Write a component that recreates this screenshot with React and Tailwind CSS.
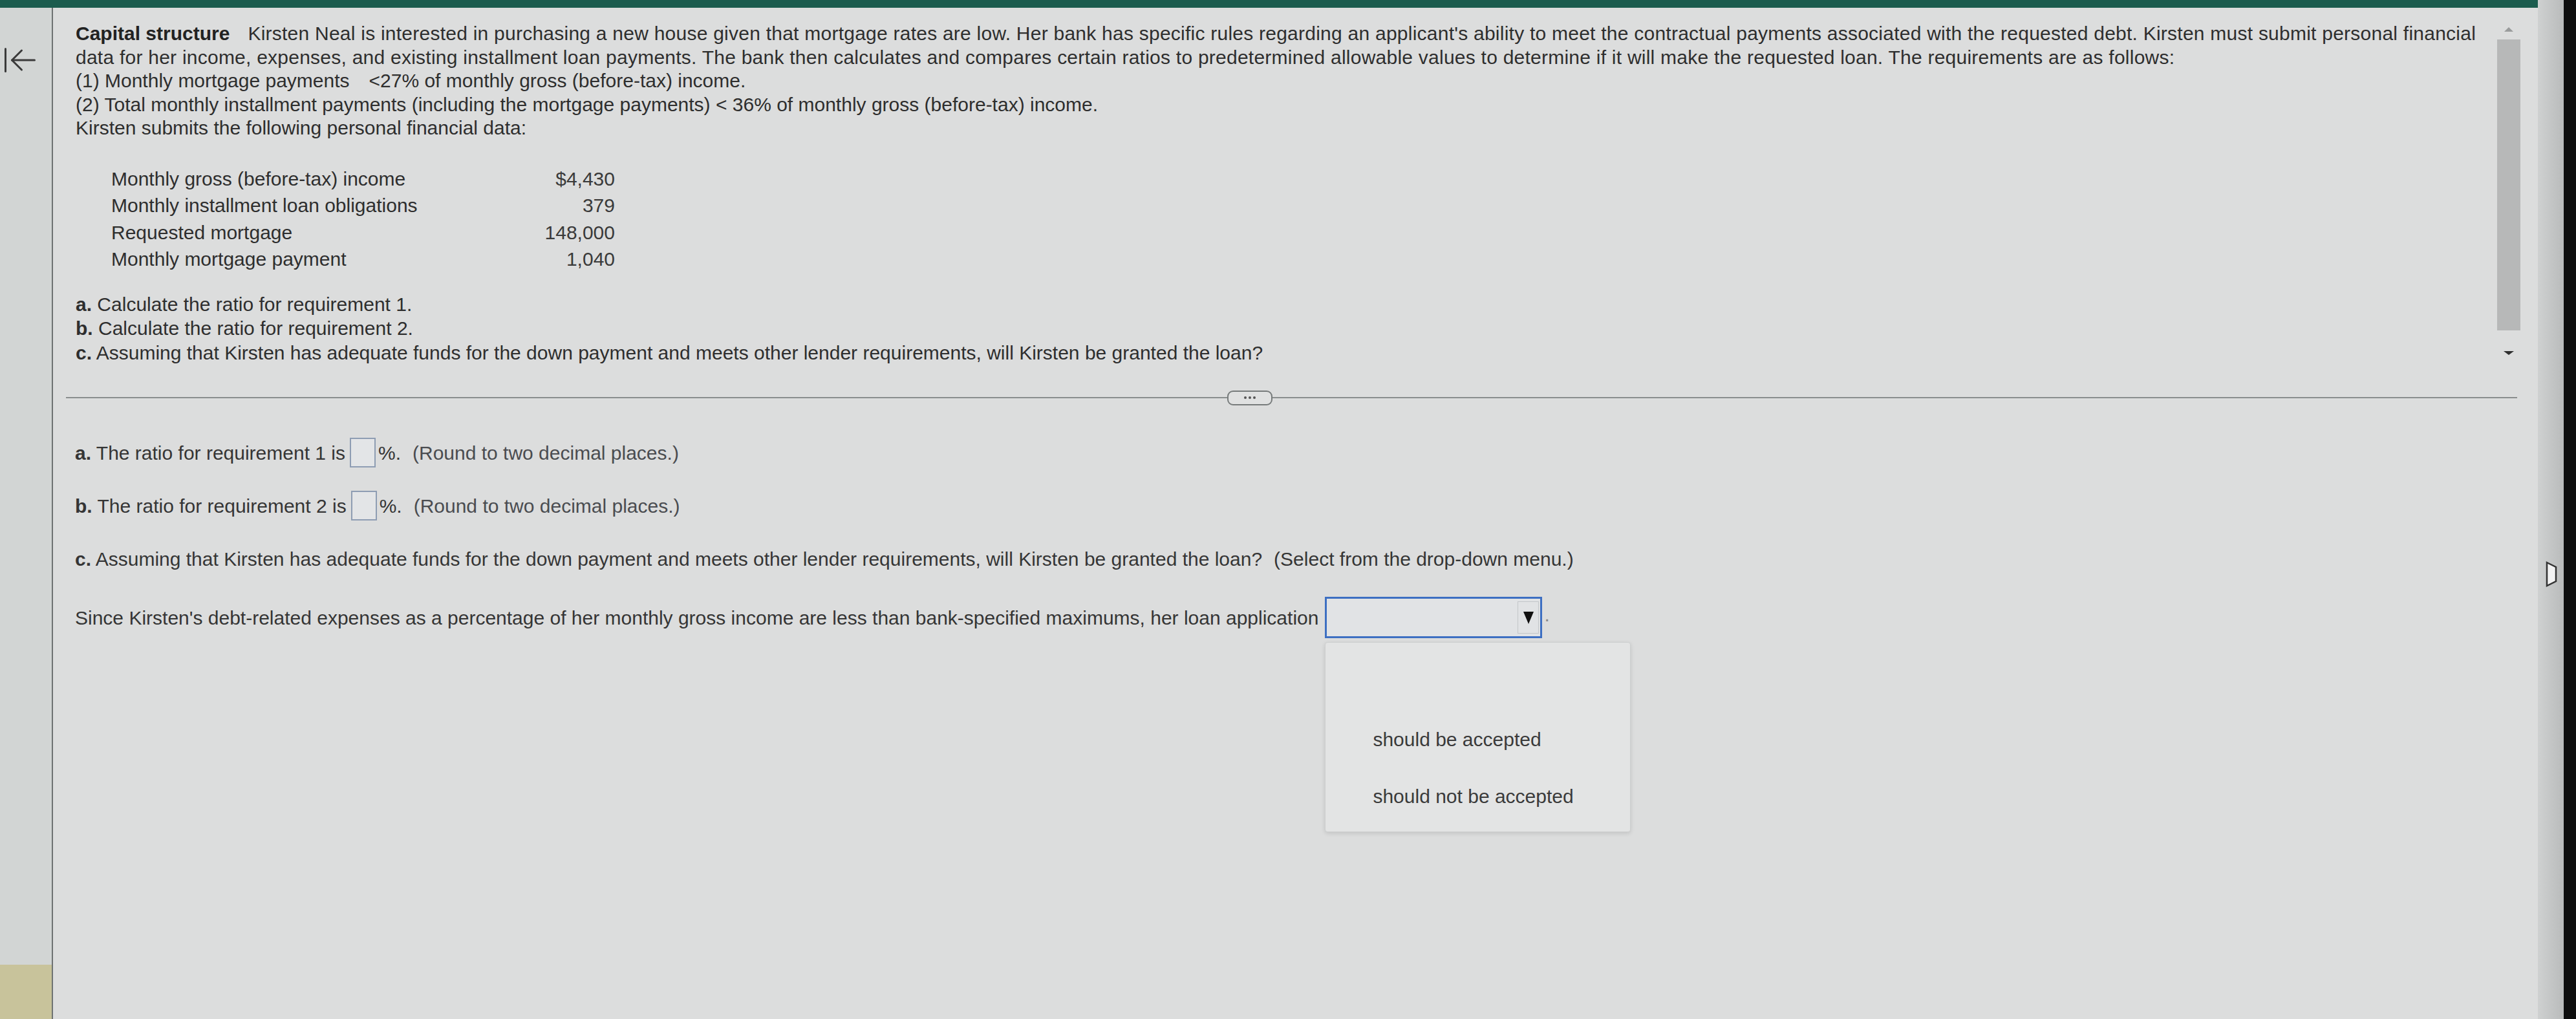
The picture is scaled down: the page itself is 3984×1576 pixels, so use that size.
import React from "react";
import { ArrowLeftToLine } from "lucide-react";

function Triangle({ dir = "down", w = 14, h = 8, color = "#333" }) {
  const pts = dir === "down" ? `0,0 ${w},0 ${w / 2},${h}` : `0,${h} ${w},${h} ${w / 2},0`;
  return (
    <svg width={w} height={h} viewBox={`0 0 ${w} ${h}`}>
      <polygon points={pts} fill={color} />
    </svg>
  );
}

function AnswerBox() {
  return <span className="inline-block w-[40px] h-[46px] border-2 border-[#8e9db3] bg-[#e3e5e7] ml-[7px] mr-[9px]" />;
}

export default function App() {
  const rows = [
    ["Monthly gross (before-tax) income", "$4,430"],
    ["Monthly installment loan obligations", "379"],
    ["Requested mortgage", "148,000"],
    ["Monthly mortgage payment", "1,040"],
  ];
  return (
    <div className="w-[3984px] h-[1576px] flex bg-[#0e0e0e] overflow-hidden font-['Liberation_Sans',Arial,sans-serif] text-[30px] text-[#2e2e2e]">
      <div className="w-[3925px] flex flex-col">
        <div className="h-[12px] bg-[#1b5c4e] shrink-0" />
        <div className="flex flex-1">
          {/* left column */}
          <div className="w-[82px] shrink-0 border-r-2 border-[#6e7272] bg-[#d2d5d4] flex flex-col justify-between">
            <div className="pt-[51px] pl-[1px] text-[#3a3a3a]">
              <ArrowLeftToLine size={60} strokeWidth={1.2} />
            </div>
            <div className="h-[84px] bg-[#c8c39b]" />
          </div>
          {/* main */}
          <div className="flex-1 bg-[#dcdddd] flex flex-col">
            {/* question pane */}
            <div className="h-[583px] flex shrink-0">
              <div className="flex-1 pl-[35px] pt-[22px]">
                <div className="leading-[36.5px] whitespace-nowrap">
                  <div className="tracking-[0.24px]">
                    <span className="font-bold text-[#222] tracking-normal">Capital structure</span>
                    <span className="ml-[28px]">
                      Kirsten Neal is interested in purchasing a new house given that mortgage rates are low. Her bank has specific rules regarding an applicant's ability to meet the contractual payments associated with the requested debt. Kirsten must submit personal financial
                    </span>
                  </div>
                  <div className="tracking-[0.24px]">
                    data for her income, expenses, and existing installment loan payments. The bank then calculates and compares certain ratios to predetermined allowable values to determine if it will make the requested loan. The requirements are as follows:
                  </div>
                  <div>
                    (1) Monthly mortgage payments<span className="ml-[30px]">&lt;27% of monthly gross (before-tax) income.</span>
                  </div>
                  <div>
                    (2) Total monthly installment payments (including the mortgage payments) &lt; 36% of monthly gross (before-tax) income.
                  </div>
                  <div>Kirsten submits the following personal financial data:</div>
                </div>
                <div className="mt-[39px] ml-[55px] w-[779px]">
                  {rows.map(([l, v]) => (
                    <div key={l} className="flex justify-between h-[41.5px] leading-[41.5px] whitespace-nowrap">
                      <span>{l}</span>
                      <span className="text-[#3a3a3a]">{v}</span>
                    </div>
                  ))}
                </div>
                <div className="mt-[30px] leading-[37.5px] whitespace-nowrap">
                  <div><span className="font-bold">a.</span> Calculate the ratio for requirement 1.</div>
                  <div><span className="font-bold">b.</span> Calculate the ratio for requirement 2.</div>
                  <div><span className="font-bold">c.</span> Assuming that Kirsten has adequate funds for the down payment and meets other lender requirements, will Kirsten be granted the loan?</div>
                </div>
              </div>
              {/* scrollbar */}
              <div className="w-[36px] mr-[27px] flex flex-col items-center">
                <div className="mt-[30px]">
                  <Triangle dir="up" w={14} h={7} color="#9a9c9c" />
                </div>
                <div className="mt-[12px] w-[36px] h-[450px] bg-[#b7b8b8]" />
                <div className="mt-[32px]">
                  <Triangle dir="down" w={16} h={6} color="#2f2f2f" />
                </div>
              </div>
            </div>
            {/* separator */}
            <div className="h-[40px] flex items-center pl-[20px] pr-[32px] shrink-0">
              <div className="w-[1796px] h-[2px] bg-[#8a8e8e]" />
              <div className="w-[70px] h-[23px] rounded-[9px] border-2 border-[#777b7b] bg-[#e0e1e1] flex items-center justify-center gap-[3px]">
                <span className="w-[4px] h-[4px] rounded-full bg-[#555]" />
                <span className="w-[4px] h-[4px] rounded-full bg-[#555]" />
                <span className="w-[4px] h-[4px] rounded-full bg-[#555]" />
              </div>
              <div className="flex-1 h-[2px] bg-[#8a8e8e]" />
            </div>
            {/* answers */}
            <div className="pt-[42px] pl-[34px] flex flex-col gap-[36px] text-[#353535] whitespace-nowrap">
              <div className="h-[46px] flex items-center">
                <span><span className="font-bold">a.</span> The ratio for requirement 1 is</span>
                <AnswerBox />
                <span className="-ml-[5px]">%.</span>
                <span className="ml-[18px] text-[#4a4c50]">(Round to two decimal places.)</span>
              </div>
              <div className="h-[46px] flex items-center">
                <span><span className="font-bold">b.</span> The ratio for requirement 2 is</span>
                <AnswerBox />
                <span className="-ml-[5px]">%.</span>
                <span className="ml-[18px] text-[#4a4c50]">(Round to two decimal places.)</span>
              </div>
              <div className="h-[46px] flex items-center">
                <span><span className="font-bold">c.</span> Assuming that Kirsten has adequate funds for the down payment and meets other lender requirements, will Kirsten be granted the loan?</span>
                <span className="ml-[18px]">(Select from the drop-down menu.)</span>
              </div>
              <div className="h-[64px] flex items-center">
                <span>Since Kirsten's debt-related expenses as a percentage of her monthly gross income are less than bank-specified maximums, her loan application</span>
                <div className="relative ml-[10px]">
                  <div className="w-[336px] h-[64px] border-[3px] border-[#3d6fc2] bg-[#e1e3e5] flex items-center justify-end pr-[2px]">
                    <div className="w-[33px] h-[50px] border border-[#c3c6c9] flex items-center justify-center">
                      <Triangle dir="down" w={16} h={19} color="#111" />
                    </div>
                  </div>
                  <div className="absolute left-0 top-[70px] w-[473px] h-[294px] bg-[#e3e4e4] border border-[#cdcfcf] rounded-[4px] shadow-[0_2px_6px_rgba(0,0,0,0.12)] pt-[17px] text-[#3a3a3a]">
                    <div className="h-[88px]" />
                    <div className="h-[88px] flex items-center pl-[73px]">should be accepted</div>
                    <div className="h-[88px] flex items-center pl-[73px]">should not be accepted</div>
                  </div>
                </div>
                <span className="ml-[3px] self-end mb-[14px] text-[#8a8c8c]">.</span>
              </div>
            </div>
          </div>
        </div>
      </div>
      {/* right bezel strip */}
      <div className="w-[40px] bg-gradient-to-r from-[#cfd1d1] to-[#b9bbbb] relative shrink-0">
        <svg className="absolute left-[12px] top-[868px]" width="18" height="40" viewBox="0 0 18 40">
          <polygon points="2,2 16,9 16,31 2,38" fill="#f2f2f2" stroke="#333" strokeWidth="2.5" />
        </svg>
      </div>
      <div className="flex-1 bg-[#0e0e0e]" />
    </div>
  );
}
